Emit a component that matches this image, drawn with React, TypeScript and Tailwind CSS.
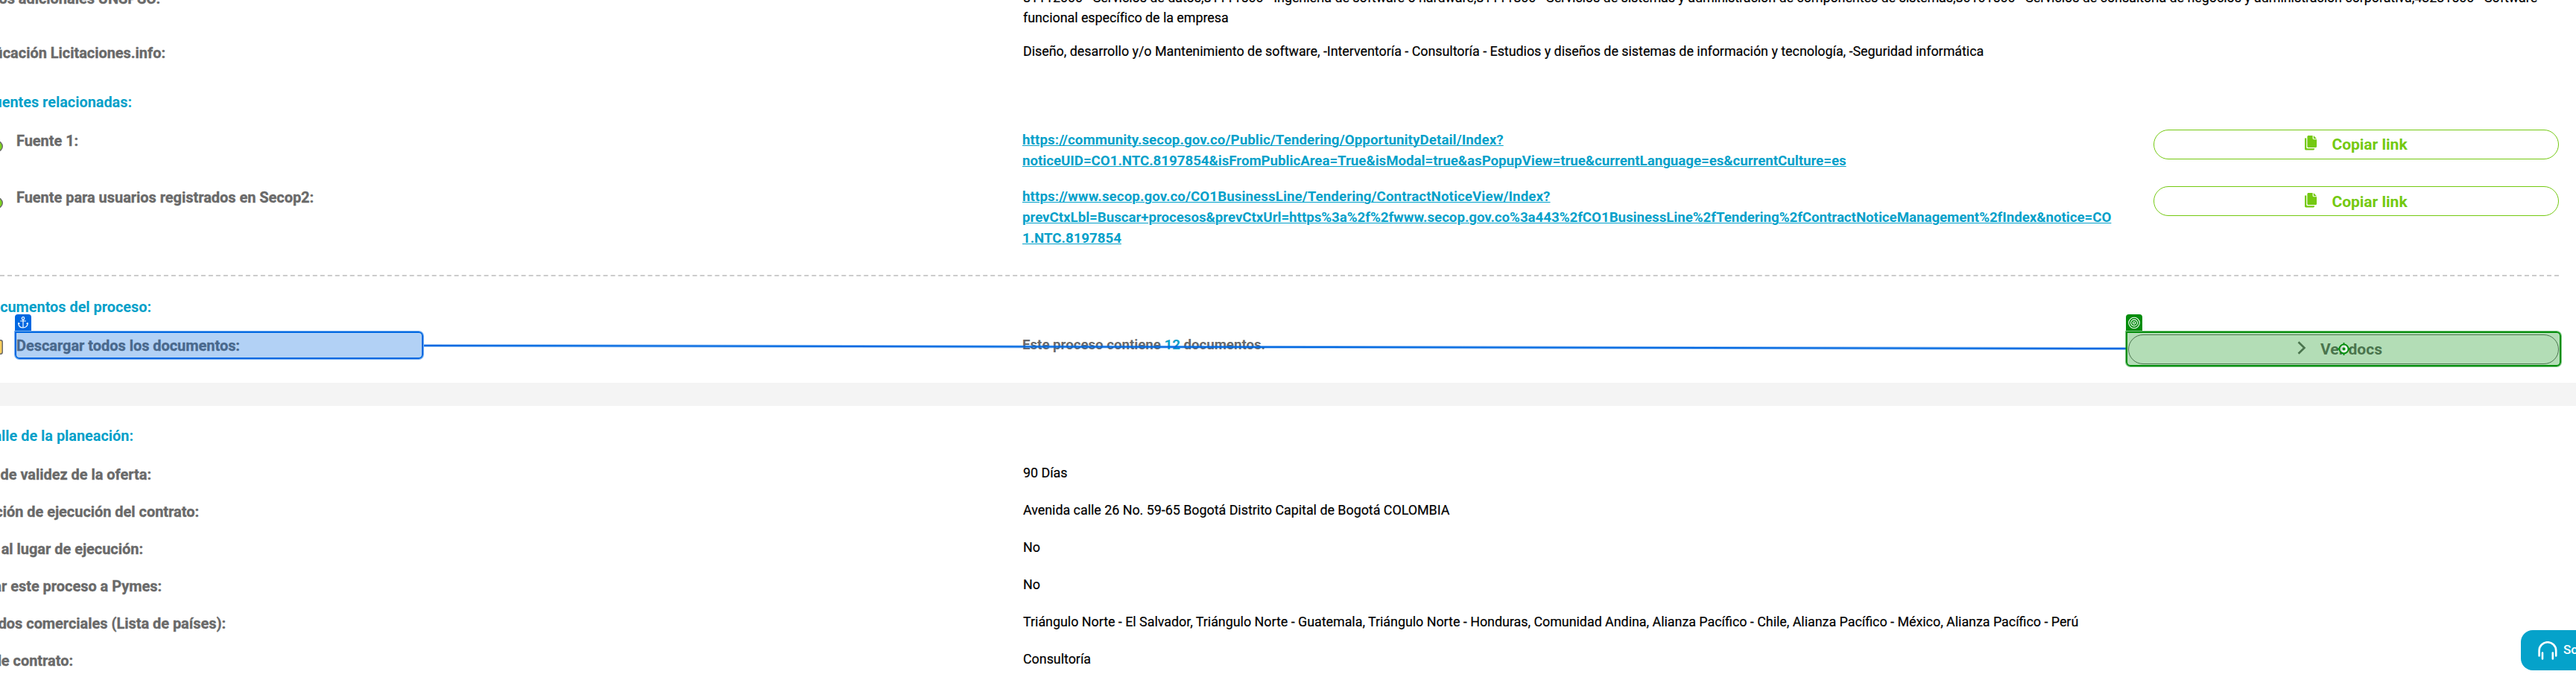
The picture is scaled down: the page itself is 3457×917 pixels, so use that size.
import type { ReactNode } from "react";

function SectionTitle({ width, className, children }: { width: string; className: string; children: ReactNode }) {
  return (
    <h2
      className={`flex h-7 shrink-0 justify-end overflow-hidden whitespace-nowrap text-[19.88px] font-bold leading-7 text-[#03a0c9] ${width} ${className}`}
    >
      {children}
    </h2>
  );
}

function InfoRow({ label, width, children }: { label: string; width: string; children: ReactNode }) {
  return (
    <div className="flex h-[50px] shrink-0">
      <div className="w-[1373px] shrink-0 pt-[3px]">
        <div
          className={`flex justify-end overflow-hidden whitespace-nowrap text-[19.92px] font-bold leading-7 text-[#696969] [-webkit-text-stroke:0.35px_#696969] ${width}`}
        >
          {label}
        </div>
      </div>
      <p className="whitespace-nowrap text-[17.85px] leading-7 text-black [-webkit-text-stroke:0.2px_#000]">{children}</p>
    </div>
  );
}

function CopyButton({ className }: { className: string }) {
  return (
    <button
      className={`flex h-10 w-[544px] items-center justify-center rounded-full border border-[#74c911] text-[21px] font-bold leading-6 text-[#74c911] ${className}`}
    >
      <svg className="mr-5 mb-1 h-5 w-4" viewBox="0 0 16 20" fill="currentColor">
        <path d="M5 0h5.6v3.6c0 .9.6 1.6 1.5 1.6H16V14.4c0 .9-.7 1.6-1.6 1.6H5c-.9 0-1.6-.7-1.6-1.6V1.600C3.400.7 4.100 0 5 0z" />
        <path d="M11.800 0 16 4.200h-4.200z" />
        <path d="M0 3.500h2.200v12.200c0 .9.6 1.500 1.500 1.500h9.300v.8c0 .8-.6 1.400-1.400 1.400H1.500c-.8 0-1.500-.6-1.500-1.400z" />
      </svg>
      Copiar link
    </button>
  );
}

function GreenDot() {
  return (
    <svg className="mt-[15px] h-[15px] w-1 shrink-0" viewBox="11 0 4 15">
      <circle cx="7.500" cy="7.500" r="6.800" fill="#7ed321" stroke="#696969" strokeWidth="1.400" />
    </svg>
  );
}

const linkClass =
  "whitespace-nowrap text-[18.66px] font-bold leading-7 text-[#03a0c9] underline decoration-1";
const labelClass =
  "w-[1350px] shrink-0 whitespace-nowrap pt-0.5 text-[19.92px] font-bold leading-7 text-[#696969] [-webkit-text-stroke:0.35px_#696969]";

export default function App() {
  return (
    <div className="relative flex h-[917px] w-[3457px] flex-col overflow-hidden bg-white font-['Roboto',sans-serif]">
      <div className="flex h-[55px] shrink-0">
        <div className="w-[1373px] shrink-0">
          <div className="-mt-[15px] flex w-[215px] justify-end overflow-hidden whitespace-nowrap text-[19.92px] font-bold leading-7 text-[#696969] [-webkit-text-stroke:0.35px_#696969]">
            Códigos adicionales UNSPSC:
          </div>
        </div>
        <p className="-mt-[17px] whitespace-nowrap text-[17.85px] leading-[27px] tracking-[-0.02px] text-black [-webkit-text-stroke:0.2px_#000]">
          81112000 - Servicios de datos,81111500 - Ingeniería de software o hardware,81111800 - Servicios de sistemas y
          administración de componentes de sistemas,80101500 - Servicios de consultoría de negocios y administración
          corporativa,43231500 - Software
          <br />
          funcional específico de la empresa
        </p>
      </div>
      <InfoRow label="Clasificación Licitaciones.info:" width="w-[222px]">
        Diseño, desarrollo y/o Mantenimiento de software, -Interventoría - Consultoría - Estudios y diseños de sistemas
        de información y tecnología, -Seguridad informática
      </InfoRow>

      <SectionTitle width="w-[177px]" className="mt-[19px]">Fuentes relacionadas:</SectionTitle>
      <div className="mt-[22px] flex h-[76px] shrink-0">
        <GreenDot />
        <div className={`ml-[18px] ${labelClass}`}>Fuente 1:</div>
        <a className={`w-[1518px] shrink-0 ${linkClass}`}>
          <span className="tracking-[0.12px]">https://community.secop.gov.co/Public/Tendering/OpportunityDetail/Index?</span>
          <br />
          noticeUID=CO1.NTC.8197854&amp;isFromPublicArea=True&amp;isModal=true&amp;asPopupView=true&amp;currentLanguage=es&amp;currentCulture=es
        </a>
        <CopyButton className="" />
      </div>
      <div className="flex h-[119px] shrink-0">
        <GreenDot />
        <div className={`ml-[18px] ${labelClass}`}>Fuente para usuarios registrados en Secop2:</div>
        <a className={`w-[1518px] shrink-0 ${linkClass}`}>
          <span className="tracking-[0.12px]">https://www.secop.gov.co/CO1BusinessLine/Tendering/ContractNoticeView/Index?</span>
          <br />
          prevCtxLbl=Buscar+procesos&amp;prevCtxUrl=https%3a%2f%2fwww.secop.gov.co%3a443%2fCO1BusinessLine%2fTendering%2fContractNoticeManagement%2fIndex&amp;notice=CO
          <br />
          1.NTC.8197854
        </a>
        <CopyButton className="pt-0.5" />
      </div>

      <div className="-ml-5 w-[3454px] shrink-0 border-t-2 border-dashed border-[#cccccc]" />
      <SectionTitle width="w-[203px]" className="mt-7">Documentos del proceso:</SectionTitle>
      <div className="mt-[22px] flex h-[65px] shrink-0">
        <svg className="mt-[7px] h-5 w-1 shrink-0" viewBox="11 0 4 20">
          <rect x="1" y=".8" width="13.200" height="18.400" rx="2.500" fill="#ffcf5c" stroke="#696969" strokeWidth="1.500" />
        </svg>
        <div className={`ml-[18px] ${labelClass}`}>Descargar todos los documentos:</div>
        <p className="w-[1484px] shrink-0 whitespace-nowrap text-[18.66px] font-bold leading-7 text-[#696969]">
          Este proceso contiene <span className="text-[#03a0c9]">12</span> documentos.
        </p>
        <button className="flex h-10 w-[578px] items-center justify-center rounded-full border border-[#696969] pr-[10px] text-[21px] font-bold leading-6 text-[#696969]">
          <svg className="mr-[19px] mb-1 h-[18px] w-3" viewBox="0 0 12 18" fill="none" stroke="currentColor" strokeWidth="2.600">
            <path d="M1.500 1.200 9.500 9l-8 7.800" />
          </svg>
          Ver docs
        </button>
      </div>

      <div className="h-[31px] shrink-0 bg-[#f4f4f4]" />
      <SectionTitle width="w-[179px]" className="mt-[27px]">Detalle de la planeación:</SectionTitle>
      <div className="mt-[21px] flex shrink-0 flex-col">
        <InfoRow label="Días de validez de la oferta:" width="w-[203px]">90 Días</InfoRow>
        <InfoRow label="Dirección de ejecución del contrato:" width="w-[267px]">
          Avenida calle 26 No. 59-65 Bogotá Distrito Capital de Bogotá COLOMBIA
        </InfoRow>
        <InfoRow label="Visita al lugar de ejecución:" width="w-[192px]">No</InfoRow>
        <InfoRow label="Limitar este proceso a Pymes:" width="w-[217px]">No</InfoRow>
        <InfoRow label="Tratados comerciales (Lista de países):" width="w-[303px]">
          Triángulo Norte - El Salvador, Triángulo Norte - Guatemala, Triángulo Norte - Honduras, Comunidad Andina,
          Alianza Pacífico - Chile, Alianza Pacífico - México, Alianza Pacífico - Perú
        </InfoRow>
        <InfoRow label="Tipo de contrato:" width="w-[98px]">Consultoría</InfoRow>
      </div>

      {/* Connector between the anchor and the target */}
      <svg className="absolute top-[455px] left-[569px] h-5 w-[2284px]" viewBox="0 0 2284 20">
        <path d="M0 9 2284 13" stroke="#0068e1" strokeOpacity=".4" strokeWidth="4" />
        <path d="M0 9 2284 13" stroke="#0068e1" strokeWidth="2" />
      </svg>

      {/* Anchor highlight */}
      <div className="absolute top-[445px] left-[20px] h-[37px] w-[548px] rounded-md rounded-tl-none border-2 border-[#0068e1] bg-[#0068e1]/30 shadow-[0_0_0_1px_rgba(0,104,225,0.5)]" />
      <div className="absolute top-[422px] left-[20px] flex h-[22px] w-[22px] items-center justify-center rounded-t bg-[#0068e1]">
        <svg className="h-4 w-[14px]" viewBox="0 0 14 16" fill="none" stroke="#fff" strokeWidth="1.200">
          <circle cx="7" cy="2.400" r="1.700" />
          <path d="M7 4v11M3.200 6h7.600" />
          <path d="M.8 8.800C.8 12.800 3.500 15 7 15s6.200-2.200 6.200-6.200M.3 10.300l.7-1.600 1.500 1M13.700 10.300l-.7-1.600-1.500 1" />
        </svg>
      </div>

      {/* Target highlight */}
      <div className="absolute top-[445px] left-[2853px] h-[47px] w-[584px] rounded-md rounded-tl-none border-2 border-[#048d0c] bg-[#048d0c]/30 shadow-[0_0_0_1px_rgba(4,141,12,0.5)]" />
      <div className="absolute top-[422px] left-[2853px] flex h-[22px] w-[22px] items-center justify-center rounded-t bg-[#048d0c]">
        <svg className="h-[17px] w-4" viewBox="0 0 16 17" fill="none" stroke="#fff" strokeWidth="1.100">
          <circle cx="8" cy="8.500" r="7.200" />
          <circle cx="8" cy="8.500" r="4.400" />
          <circle cx="8" cy="8.500" r="1.700" />
        </svg>
      </div>
      <svg className="absolute top-[459px] left-[3135.500px] h-[19px] w-[19px]" viewBox="0 0 19 19">
        <circle cx="9.500" cy="9.500" r="6" fill="#fff" fillOpacity=".7" stroke="#048d0c" strokeWidth="1.800" />
        <circle cx="9.500" cy="9.500" r="2" fill="#048d0c" />
        <path d="M9.500 1v3M9.500 15v3M1 9.500h3M15 9.500h3" stroke="#048d0c" strokeWidth="1.800" />
      </svg>

      {/* Support chat launcher */}
      <button className="absolute top-[846px] left-[3383px] flex h-[54px] w-[120px] items-center rounded-l-2xl bg-[#05a2ca] pl-[23px] text-[17px] font-medium text-white">
        <svg className="mr-2 h-[25px] w-[26px] shrink-0" viewBox="0 0 26 25" fill="none" stroke="#fff" strokeWidth="2.600" strokeLinecap="round">
          <path d="M1.600 19.500V12.500a11.300 11.300 0 0 1 22.600 0v7" />
          <path d="M6 15.500v8M19.800 15.500v8" />
        </svg>
        Soporte
      </button>
    </div>
  );
}
